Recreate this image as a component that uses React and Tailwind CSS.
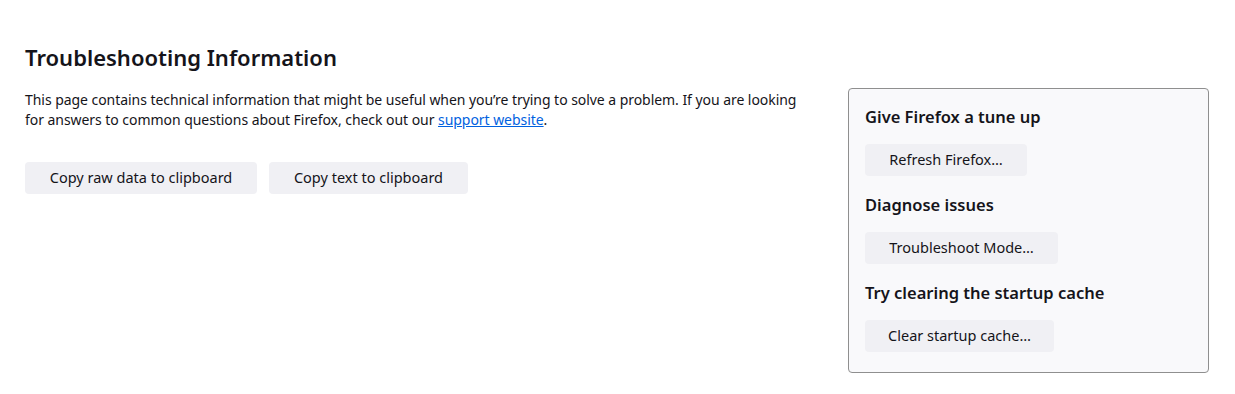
export default function App() {
  const font = { fontFamily: '"Noto Sans", "Open Sans", sans-serif' };
  return (
    <div className="w-[1235px] h-[394px] bg-white text-[#15141a]" style={font}>
      <div className="flex gap-[28px] pl-[25px] pr-[26px] pt-[42px]">
        <div className="flex-1">
          <h1 className="text-[22px] leading-[30px] font-semibold">Troubleshooting Information</h1>
          <p className="mt-[18px] pr-[10px] text-[14px] leading-[19.5px] tracking-[-0.05px]">
            This page contains technical information that might be useful when you’re trying to solve a problem. If you are looking for answers to common questions about Firefox, check out our{' '}
            <a href="#" className="text-[#0061e0] underline">support website</a>.
          </p>
          <div className="mt-[33px] flex gap-[12px]">
            <button className="h-[32px] w-[232px] rounded-[4px] bg-[#f0f0f4] text-[14.5px]">Copy raw data to clipboard</button>
            <button className="h-[32px] w-[199px] rounded-[4px] bg-[#f0f0f4] text-[14.5px]">Copy text to clipboard</button>
          </div>
        </div>
        <div className="mt-[46px] w-[361px] h-[285px] rounded-[4px] border border-[#8f8f8f] bg-[#f9f9fb] px-[16px] pt-[16px] flex flex-col">
          <h3 className="text-[16.5px] leading-[24px] font-semibold">Give Firefox a tune up</h3>
          <button className="mt-[15px] self-start h-[32px] w-[162px] rounded-[4px] bg-[#f0f0f4] text-[14.5px]">Refresh Firefox…</button>
          <h3 className="mt-[17px] text-[16.5px] leading-[24px] font-semibold">Diagnose issues</h3>
          <button className="mt-[15px] self-start h-[32px] w-[193px] rounded-[4px] bg-[#f0f0f4] text-[14.5px]">Troubleshoot Mode…</button>
          <h3 className="mt-[17px] text-[16.5px] leading-[24px] font-semibold">Try clearing the startup cache</h3>
          <button className="mt-[15px] self-start h-[32px] w-[189px] rounded-[4px] bg-[#f0f0f4] text-[14.5px]">Clear startup cache…</button>
        </div>
      </div>
    </div>
  );
}
